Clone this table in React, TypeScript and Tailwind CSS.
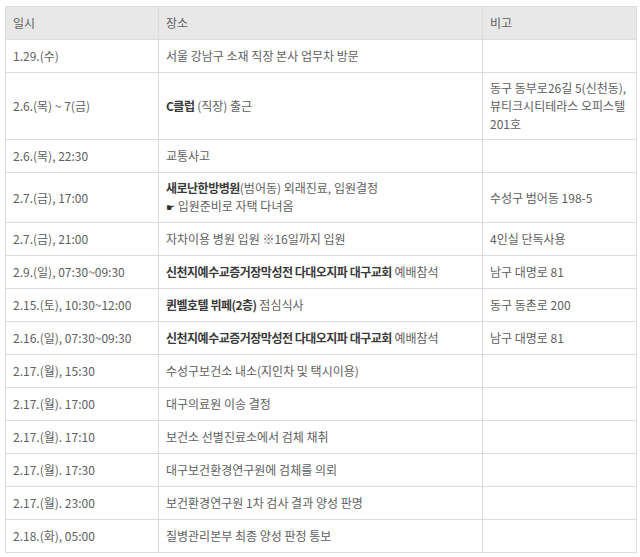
const B = ({ children }: { children: React.ReactNode }) => (
  <b className="font-bold tracking-[-0.5px] text-[#3a3a3a]">{children}</b>
);

const rows: { date: string; place: React.ReactNode; note: React.ReactNode }[] = [
  { date: "1.29.(수)", place: "서울 강남구 소재 직장 본사 업무차 방문", note: "" },
  {
    date: "2.6.(목) ~ 7(금)",
    place: (
      <>
        <B>C클럽</B> (직장) 출근
      </>
    ),
    note: (
      <>
        동구 동부로26길 5(신천동),
        <br />
        뷰티크시티테라스 오피스텔
        <br />
        201호
      </>
    ),
  },
  { date: "2.6.(목), 22:30", place: "교통사고", note: "" },
  {
    date: "2.7.(금), 17:00",
    place: (
      <>
        <B>새로난한방병원</B>(범어동) 외래진료, 입원결정
        <br />
        <span className="text-[10px] text-[#333]">☛</span> 입원준비로 자택 다녀옴
      </>
    ),
    note: "수성구 범어동 198-5",
  },
  { date: "2.7.(금), 21:00", place: "자차이용 병원 입원 ※16일까지 입원", note: "4인실 단독사용" },
  {
    date: "2.9.(일), 07:30~09:30",
    place: (
      <>
        <B>신천지예수교증거장막성전 다대오지파 대구교회</B> 예배참석
      </>
    ),
    note: "남구 대명로 81",
  },
  {
    date: "2.15.(토), 10:30~12:00",
    place: (
      <>
        <B>퀸벨호텔 뷔페(2층)</B> 점심식사
      </>
    ),
    note: "동구 동촌로 200",
  },
  {
    date: "2.16.(일), 07:30~09:30",
    place: (
      <>
        <B>신천지예수교증거장막성전 다대오지파 대구교회</B> 예배참석
      </>
    ),
    note: "남구 대명로 81",
  },
  { date: "2.17.(월), 15:30", place: "수성구보건소 내소(지인차 및 택시이용)", note: "" },
  { date: "2.17.(월). 17:00", place: "대구의료원 이송 결정", note: "" },
  { date: "2.17.(월). 17:10", place: "보건소 선별진료소에서 검체 채취", note: "" },
  { date: "2.17.(월). 17:30", place: "대구보건환경연구원에 검체를 의뢰", note: "" },
  { date: "2.17.(월). 23:00", place: "보건환경연구원 1차 검사 결과 양성 판명", note: "" },
  { date: "2.18.(화), 05:00", place: "질병관리본부 최종 양성 판정 통보", note: "" },
];

const cell = "h-[33px] border border-[#dcdcdc] px-[7px] py-[6px] align-middle";

export default function App() {
  return (
    <div
      className="min-h-[557px] bg-white pl-[5px] pt-[6px] text-[12px] leading-[18px] text-[#606060]"
      style={{ fontFamily: '"Noto Sans CJK KR", "Noto Sans", sans-serif' }}
    >
      <table className="w-[631px] table-fixed border-collapse text-left">
        <colgroup>
          <col className="w-[153px]" />
          <col className="w-[324px]" />
          <col className="w-[154px]" />
        </colgroup>
        <thead>
          <tr className="bg-[#e8e8e8]">
            <th className={`${cell} font-normal`}>일시</th>
            <th className={`${cell} font-normal`}>장소</th>
            <th className={`${cell} font-normal`}>비고</th>
          </tr>
        </thead>
        <tbody>
          {rows.map((r, i) => (
            <tr key={i}>
              <td className={cell}>{r.date}</td>
              <td className={cell}>{r.place}</td>
              <td className={cell}>{r.note}</td>
            </tr>
          ))}
        </tbody>
      </table>
    </div>
  );
}
